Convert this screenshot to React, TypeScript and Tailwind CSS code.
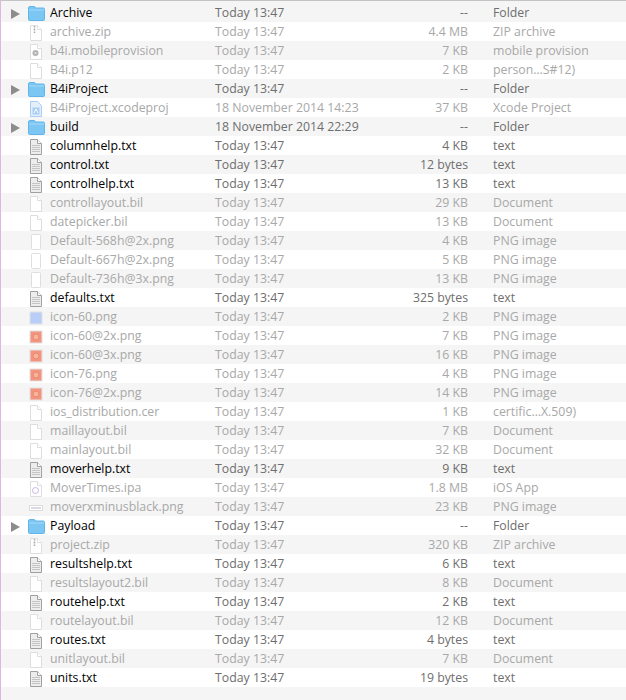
type IconKind = "folder" | "zip" | "prov" | "blank" | "xcode" | "text" | "phone" | "blue" | "red" | "ipa" | "wide"

type Item = {
  name: string
  date?: string
  size: string
  kind: string
  icon: IconKind
}

const items: Item[] = [
  { name: "Archive", size: "--", kind: "Folder", icon: "folder" },
  { name: "archive.zip", size: "4.4 MB", kind: "ZIP archive", icon: "zip" },
  { name: "b4i.mobileprovision", size: "7 KB", kind: "mobile provision", icon: "prov" },
  { name: "B4i.p12", size: "2 KB", kind: "person…S#12)", icon: "blank" },
  { name: "B4iProject", size: "--", kind: "Folder", icon: "folder" },
  { name: "B4iProject.xcodeproj", date: "18 November 2014 14:23", size: "37 KB", kind: "Xcode Project", icon: "xcode" },
  { name: "build", date: "18 November 2014 22:29", size: "--", kind: "Folder", icon: "folder" },
  { name: "columnhelp.txt", size: "4 KB", kind: "text", icon: "text" },
  { name: "control.txt", size: "12 bytes", kind: "text", icon: "text" },
  { name: "controlhelp.txt", size: "13 KB", kind: "text", icon: "text" },
  { name: "controllayout.bil", size: "29 KB", kind: "Document", icon: "blank" },
  { name: "datepicker.bil", size: "13 KB", kind: "Document", icon: "blank" },
  { name: "Default-568h@2x.png", size: "4 KB", kind: "PNG image", icon: "phone" },
  { name: "Default-667h@2x.png", size: "5 KB", kind: "PNG image", icon: "phone" },
  { name: "Default-736h@3x.png", size: "13 KB", kind: "PNG image", icon: "phone" },
  { name: "defaults.txt", size: "325 bytes", kind: "text", icon: "text" },
  { name: "icon-60.png", size: "2 KB", kind: "PNG image", icon: "blue" },
  { name: "icon-60@2x.png", size: "7 KB", kind: "PNG image", icon: "red" },
  { name: "icon-60@3x.png", size: "16 KB", kind: "PNG image", icon: "red" },
  { name: "icon-76.png", size: "4 KB", kind: "PNG image", icon: "red" },
  { name: "icon-76@2x.png", size: "14 KB", kind: "PNG image", icon: "red" },
  { name: "ios_distribution.cer", size: "1 KB", kind: "certific…X.509)", icon: "blank" },
  { name: "maillayout.bil", size: "7 KB", kind: "Document", icon: "blank" },
  { name: "mainlayout.bil", size: "32 KB", kind: "Document", icon: "blank" },
  { name: "moverhelp.txt", size: "9 KB", kind: "text", icon: "text" },
  { name: "MoverTimes.ipa", size: "1.8 MB", kind: "iOS App", icon: "ipa" },
  { name: "moverxminusblack.png", size: "23 KB", kind: "PNG image", icon: "wide" },
  { name: "Payload", size: "--", kind: "Folder", icon: "folder" },
  { name: "project.zip", size: "320 KB", kind: "ZIP archive", icon: "zip" },
  { name: "resultshelp.txt", size: "6 KB", kind: "text", icon: "text" },
  { name: "resultslayout2.bil", size: "8 KB", kind: "Document", icon: "blank" },
  { name: "routehelp.txt", size: "2 KB", kind: "text", icon: "text" },
  { name: "routelayout.bil", size: "12 KB", kind: "Document", icon: "blank" },
  { name: "routes.txt", size: "4 bytes", kind: "text", icon: "text" },
  { name: "unitlayout.bil", size: "7 KB", kind: "Document", icon: "blank" },
  { name: "units.txt", size: "19 bytes", kind: "text", icon: "text" },
]

const sheet = "M2.5 .5H9.5L13.5 4.5V15.5H2.5Z"

function FileIcon({ icon }: { icon: IconKind }) {
  if (icon === "folder") {
    return (
      <svg width="17" height="15" viewBox="0 0 17 15">
        <path d="M.5 2Q.5 .5 2 .5H6Q7 .5 7.5 2H15.5Q16.5 2 16.5 3.5V13.5Q16.5 14.5 15.5 14.5H1.5Q.5 14.5 .5 13.5Z" fill="#7cc6f3" stroke="#62b5e8" />
        <path d="M1 4H16" stroke="#a4daf8" />
      </svg>
    )
  }
  if (icon === "phone") {
    return (
      <svg width="16" height="16" viewBox="0 0 16 16">
        <rect x="3.5" y=".5" width="9" height="15" rx="1" fill="#fff" stroke="#dedede" />
      </svg>
    )
  }
  if (icon === "blue" || icon === "red") {
    const fill = icon === "blue" ? "#b9cdf8" : "#f39480"
    return (
      <svg width="16" height="16" viewBox="0 0 16 16">
        <rect x="2" y="2" width="12" height="12" fill={fill} stroke="#e2e2e2" />
        {icon === "red" && <rect x="5" y="5" width="6" height="6" rx="3" fill="#f7b598" stroke="#ec8670" />}
      </svg>
    )
  }
  if (icon === "wide") {
    return (
      <svg width="16" height="16" viewBox="0 0 16 16">
        <rect x="1.5" y="5.5" width="13" height="5" fill="#fff" stroke="#dddddd" />
        <path d="M3 8H13" stroke="#b9b4cc" />
      </svg>
    )
  }
  const isText = icon === "text"
  const line = isText ? "#a0a0a0" : "#dedede"
  return (
    <svg width="16" height="16" viewBox="0 0 16 16">
      <path d={sheet} fill={isText ? "#ededed" : "#fff"} stroke={line} />
      <path d="M9.5 .5V4.5H13.5" fill="#fff" stroke={line} />
      {isText && <path d="M4 6.5H12M4 8.5H12M4 10.5H12M4 12.5H12" stroke="#c4c4c4" />}
      {icon === "zip" && <path d="M6.5 1V8" stroke="#a8a8a8" strokeWidth="1.5" strokeDasharray="1 .5" />}
      {icon === "prov" && (
        <>
          <circle cx="7.5" cy="9" r="3" fill="#b4b4b4" />
          <circle cx="7.5" cy="9" r="1" fill="#e6e6e6" />
        </>
      )}
      {icon === "xcode" && (
        <>
          <path d={sheet} fill="#e3effb" stroke="#a9cdf5" />
          <rect x="4.5" y="6.5" width="7" height="7" fill="#a9cdf5" />
          <path d="M6 12L8 8L10 12" fill="none" stroke="#ffffff" />
        </>
      )}
      {icon === "ipa" && <circle cx="7.5" cy="9.5" r="3" fill="none" stroke="#c8b4e4" />}
    </svg>
  )
}

export default function App() {
  return (
    <div className="h-[700px] w-[626px] overflow-hidden bg-[#f5f5f5] font-['Open_Sans',sans-serif] text-[12.3px]">
      <div className="h-px bg-[#c4c4c4]" />
      <div className="h-[699px] border-l border-l-[#e3b5e3] pt-[2px]">
        {items.map((item, i) => {
          const dim = item.icon !== "folder" && item.icon !== "text"
          const meta = dim ? "text-[#a8a8a8]" : "text-[#6e6e6e]"
          return (
            <div key={item.name} className={`flex h-[19px] items-center pt-[2px] ${i % 2 === 0 ? "bg-[#f5f5f5]" : "bg-white"}`}>
              <div className="flex w-[27px] shrink-0 justify-end pr-[8px]">
                {item.icon === "folder" && (
                  <svg width="9" height="10" viewBox="0 0 9 10">
                    <path d="M0 0L9 5L0 10Z" fill="#8c8c8c" />
                  </svg>
                )}
              </div>
              <div className="flex w-[22px] shrink-0 justify-start">
                <FileIcon icon={item.icon} />
              </div>
              <div className={`w-[165px] shrink-0 truncate ${dim ? "text-[#a8a8a8]" : "text-black"}`}>{item.name}</div>
              <div className={`w-[170px] shrink-0 ${meta}`}>{item.date ?? "Today 13:47"}</div>
              <div className={`w-[83px] shrink-0 text-right ${meta}`}>{item.size}</div>
              <div className={`ml-[25px] ${meta}`}>{item.kind}</div>
            </div>
          )
        })}
      </div>
    </div>
  )
}
